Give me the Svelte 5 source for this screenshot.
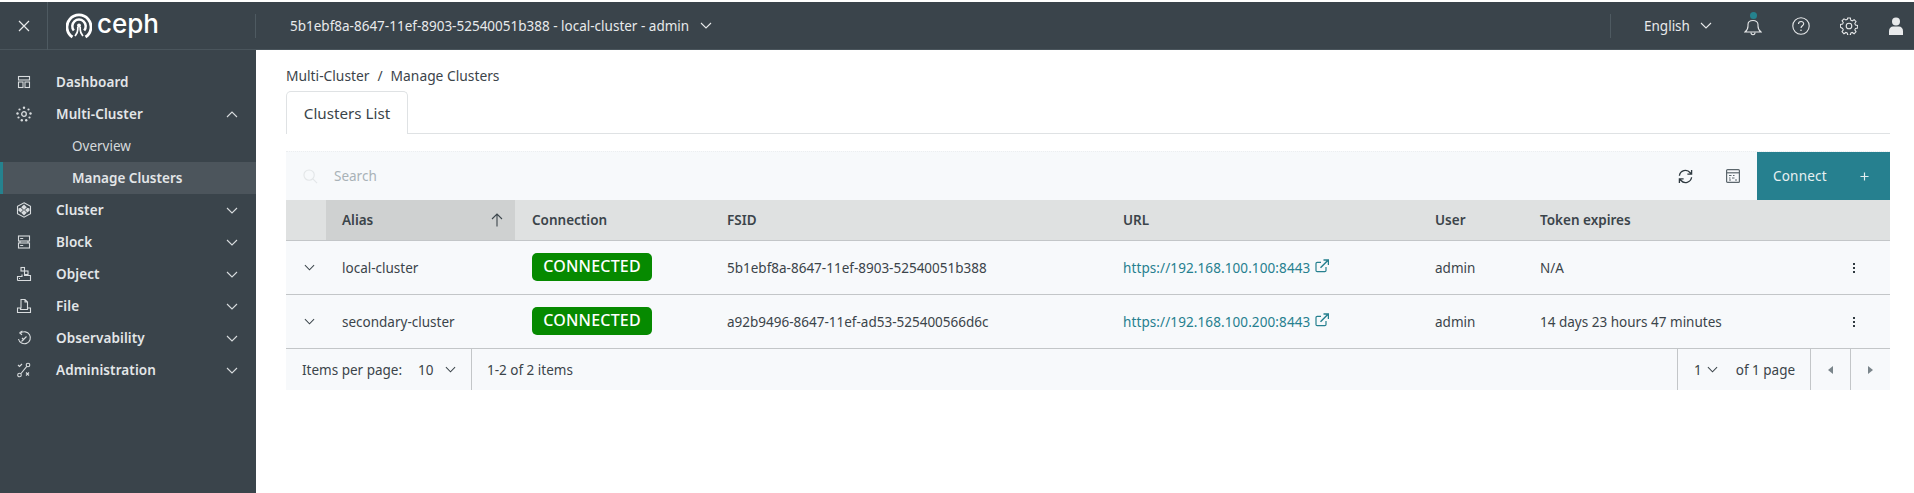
<script>
  const navItems = [
    { label: "Dashboard", icon: "dashboard" },
    { label: "Multi-Cluster", icon: "multi", open: true },
    { label: "Cluster", icon: "cluster", caret: true },
    { label: "Block", icon: "block", caret: true },
    { label: "Object", icon: "object", caret: true },
    { label: "File", icon: "file", caret: true },
    { label: "Observability", icon: "obs", caret: true },
    { label: "Administration", icon: "admin", caret: true },
  ];

  const clusters = [
    {
      alias: "local-cluster",
      fsid: "5b1ebf8a-8647-11ef-8903-52540051b388",
      url: "https://192.168.100.100:8443",
      user: "admin",
      expires: "N/A",
    },
    {
      alias: "secondary-cluster",
      fsid: "a92b9496-8647-11ef-ad53-525400566d6c",
      url: "https://192.168.100.200:8443",
      user: "admin",
      expires: "14 days 23 hours 47 minutes",
    },
  ];
</script>

{#snippet chevron(cls)}
  <svg class={cls} viewBox="0 0 12 7" width="12" height="7"><path d="M1 1l5 5 5-5" fill="none" stroke="currentColor" stroke-width="1.1" /></svg>
{/snippet}

{#snippet navIcon(name)}
  <svg class="nav-icon" viewBox="0 0 16 16" width="16" height="16" fill="none" stroke="currentColor" stroke-width="1.100">
    {#if name === "dashboard"}
      <rect x="2.500" y="2.500" width="11" height="3.500" /><rect x="2.500" y="8" width="4.500" height="5.500" /><rect x="9" y="8" width="4.500" height="5.500" />
    {:else if name === "multi"}
      <circle cx="8" cy="8" r="2.300" stroke-width="1.300" />
      <g fill="currentColor" stroke="none"><circle cx="8" cy="1.800" r="1.200" /><circle cx="12.500" cy="3.500" r="1.100" /><circle cx="14.500" cy="7.500" r="1.200" /><circle cx="13.500" cy="11.500" r="1.100" /><circle cx="10.200" cy="14.200" r="1.200" /><circle cx="5.800" cy="14.200" r="1.200" /><circle cx="2.500" cy="11.500" r="1.100" /><circle cx="1.500" cy="7.500" r="1.200" /><circle cx="3.500" cy="3.500" r="1.100" /></g>
    {:else if name === "cluster"}
      <path d="M8 .8l6.500 3.500v7.400L8 15.200l-6.500-3.500V4.300z" />
      <g fill="currentColor" stroke="none"><path d="M8 2.500l2.800 2.800L8 8 5.200 5.300z" /><path d="M8 8l2.800 2.800L8 13.500l-2.800-2.700z" /><path d="M4.500 5.700L7 8l-2.500 2.500-2-2V6.500z" /><path d="M11.500 5.700l2 .8v2l-2 2L9 8z" /></g>
    {:else if name === "block"}
      <rect x="2.500" y="2" width="11" height="5" /><rect x="2.500" y="9" width="11" height="5" />
      <path d="M4 7v2M12 7v2M4.200 4.500h3M4.200 11.500h3" />
    {:else if name === "object"}
      <rect x="5" y="1.500" width="3.500" height="3.500" /><rect x="8.500" y="5" width="3.500" height="3.500" />
      <path d="M1.500 14.500v-4h4.500v-2M1.500 14.500h13v-5h-6.500" /><path d="M3 12.500h1" />
    {:else if name === "file"}
      <path d="M5 10.500V1.500h4l2.500 2.500v6.500M9 1.500V4h2.500" />
      <path d="M1.500 10v4.500h13V10h-3v1.500h-7V10z" />
    {:else if name === "obs"}
      <path d="M3.500 2.800l3-1.800M3.500 2.800l2.500 2" />
      <path d="M4.500 3.200A6 6 0 1 1 2.500 9" />
      <path d="M5.500 11.500l5-5M6 8l2 2" />
    {:else}
      <circle cx="12" cy="3" r="1.800" /><circle cx="3.500" cy="13" r="1.800" />
      <path d="M5 11.500l5.800-7.200M2 3l1.500 1.500L6 2M10 10.500l3 3M13 10.500l-3 3" />
    {/if}
  </svg>
{/snippet}

<div class="page">
  <header class="topbar">
    <button class="close" aria-label="Close">
      <svg viewBox="0 0 12 12" width="12" height="12"><path d="M1 1l10 10M11 1L1 11" stroke="#e8eaeb" stroke-width="1.200" /></svg>
    </button>
    <div class="brand">
      <svg viewBox="0 0 26 26" width="26" height="26" fill="none" stroke="#fff">
        <path d="M6.500 24A12 12 0 1 1 19.500 24" stroke-width="2.800" />
        <path d="M7.800 17.500A6.700 6.700 0 1 1 18.200 17.500" stroke-width="2.500" />
        <circle cx="13" cy="12.500" r="2" fill="#fff" stroke="none" />
        <path d="M11.800 14v2.500c0 3-1 4-2.800 6.500M14.200 14v2.500c0 3 1 4 2.800 6.500" stroke-width="1.700" />
      </svg>
      <span class="brand-name">ceph</span>
    </div>
    <div class="cluster-select">
      <span>5b1ebf8a-8647-11ef-8903-52540051b388 - local-cluster - admin</span>
      {@render chevron("top-chev")}
    </div>
    <div class="utility">
      <div class="lang">
        <span>English</span>
        {@render chevron("top-chev")}
      </div>
      <span class="util-btn bell">
        <svg viewBox="0 0 18 22" width="18" height="22" fill="none" stroke="#e8eaeb" stroke-width="1.100">
          <path d="M1 17c2-1.500 3-3 3-6V9.500C4 7 6 5.500 9 5.500s5 1.500 5 4V11c0 3 1 4.500 3 6z" />
          <path d="M7 17.500c0 3 4 3 4 0" />
        </svg>
        <i class="dot"></i>
      </span>
      <span class="util-btn">
        <svg viewBox="0 0 18 18" width="18" height="18" fill="none" stroke="#e8eaeb" stroke-width="1.100">
          <circle cx="9" cy="9" r="8.200" />
          <path d="M6.500 7c0-3.200 5.200-3.200 5.200-.2 0 2-2.700 2-2.700 4.200" />
          <circle cx="9" cy="13.300" r=".8" fill="#e8eaeb" stroke="none" />
        </svg>
      </span>
      <span class="util-btn">
        <svg viewBox="0 0 18 18" width="18" height="18" fill="none" stroke="#e8eaeb" stroke-width="1.100">
          <circle cx="9" cy="9" r="2.800" />
          <path d="M7.600 .8h2.800l.4 2.300 1.500.7 2-1.200 2 2-1.300 1.900.7 1.600 2.300.4v2.800l-2.300.4-.7 1.500 1.300 2-2 2-2-1.300-1.500.7-.4 2.300H7.600l-.4-2.300-1.500-.7-2 1.300-2-2 1.300-2-.7-1.500L0 10.400V7.600l2.300-.4.700-1.600-1.300-1.900 2-2 2 1.200 1.500-.7z" transform="translate(.4 .2) scale(.96)" />
        </svg>
      </span>
      <span class="util-btn last">
        <svg viewBox="0 0 14 18" width="14" height="18" fill="#e8eaeb">
          <circle cx="7" cy="4.500" r="4" />
          <path d="M0 18v-4c0-3 2-4.500 4-4.500h6c2 0 4 1.500 4 4.500v4z" />
        </svg>
      </span>
    </div>
  </header>

  <div class="body">
    <nav class="sidebar">
      {#each navItems as item}
        <div class="nav-row">
          {@render navIcon(item.icon)}
          <span class="nav-label">{item.label}</span>
          {#if item.open}
            {@render chevron("nav-chev up")}
          {:else if item.caret}
            {@render chevron("nav-chev")}
          {/if}
        </div>
        {#if item.open}
          <div class="nav-sub">Overview</div>
          <div class="nav-sub active">Manage Clusters</div>
        {/if}
      {/each}
    </nav>

    <main class="content">
      <div class="crumbs">
        <span>Multi-Cluster</span><span class="sep">/</span><span>Manage Clusters</span>
      </div>
      <div class="tabs">
        <div class="tab">Clusters List</div>
      </div>

      <section class="datatable">
        <div class="toolbar">
          <svg class="search-icon" viewBox="0 0 16 16" width="15" height="15" fill="none" stroke="#e3e6e8" stroke-width="1.200">
            <circle cx="6.500" cy="6.500" r="5.500" /><path d="M10.500 10.500L15 15" />
          </svg>
          <span class="search">Search</span>
          <span class="tool">
            <svg viewBox="0 0 16 16" width="15" height="15" fill="none" stroke="#2f3a40" stroke-width="1.400">
              <path d="M1.500 7.200A6.500 6.500 0 0 1 13 4l1 1.500M14.500 1v4.500H10M14.500 8.800A6.500 6.500 0 0 1 3 12l-1-1.500M1.500 15v-4.500H6" />
            </svg>
          </span>
          <span class="tool">
            <svg viewBox="0 0 14 14" width="14" height="14" fill="none" stroke="#5b666c" stroke-width="1.200">
              <rect x=".6" y=".6" width="12.800" height="12.800" rx="1" />
              <path d="M.6 3.800h12.800" />
              <path d="M3 6.500h2.500M7 6.500h1.500M3 9h1.500M6 9h2.500M9 11h2M3 11h2" stroke-width="1" />
            </svg>
          </span>
          <button class="connect">
            <span>Connect</span>
            <svg viewBox="0 0 10 10" width="9" height="9"><path d="M5 .5v9M.5 5h9" stroke="#e3eef0" stroke-width="1.300" /></svg>
          </button>
        </div>

        <div class="grid head">
          <div class="cell"></div>
          <div class="cell sorted"><span>Alias</span>
            <svg viewBox="0 0 12 14" width="12" height="14" fill="none" stroke="#3c464c" stroke-width="1.100"><path d="M6 13.500V1M1 6l5-5 5 5" /></svg>
          </div>
          <div class="cell">Connection</div>
          <div class="cell">FSID</div>
          <div class="cell">URL</div>
          <div class="cell">User</div>
          <div class="cell">Token expires</div>
          <div class="cell"></div>
        </div>

        {#each clusters as c}
          <div class="grid row">
            <div class="cell expand">{@render chevron("row-chev")}</div>
            <div class="cell">{c.alias}</div>
            <div class="cell"><span class="badge">CONNECTED</span></div>
            <div class="cell">{c.fsid}</div>
            <div class="cell link">
              <span>{c.url}</span>
              <svg viewBox="0 0 14 14" width="14" height="14" fill="none" stroke="#26808f" stroke-width="1.200">
                <path d="M11 8v3.500a1.200 1.200 0 0 1-1.200 1.200H2.200A1.200 1.200 0 0 1 1 11.500V4.500a1.200 1.200 0 0 1 1.200-1.200H6" />
                <path d="M5.500 8.800L12.500 1.800M8.500 1h5v5" stroke-width="1.500" />
              </svg>
            </div>
            <div class="cell">{c.user}</div>
            <div class="cell">{c.expires}</div>
            <div class="cell kebab"><i></i><i></i><i></i></div>
          </div>
        {/each}

        <div class="pager">
          <div class="per-page">
            <span>Items per page:</span><span class="num">10</span>
            {@render chevron("row-chev")}
          </div>
          <div class="range">1-2 of 2 items</div>
          <div class="pages">
            <span>1</span>
            {@render chevron("row-chev small")}
            <span class="of">of 1 page</span>
          </div>
          <div class="step"><i class="tri left"></i></div>
          <div class="step"><i class="tri right"></i></div>
        </div>
      </section>
    </main>
  </div>
</div>

<style>
  :global(body) {
    margin: 0;
    background: #fff;
    font-family: "Noto Sans", "Open Sans", sans-serif;
  }
  .page {
    padding-top: 2px;
    height: 491px;
    display: flex;
    flex-direction: column;
    overflow: hidden;
    font-size: 13.500px;
    color: #3b444a;
  }
  .topbar {
    flex: 0 0 48px;
    box-sizing: border-box;
    height: 48px;
    display: flex;
    align-items: center;
    background: #3a444b;
    border-bottom: 1px solid #4a555c;
    color: #e8eaeb;
  }
  .close {
    width: 48px;
    height: 48px;
    padding: 0;
    background: none;
    border: none;
    border-right: 1px solid #4e5a61;
    display: flex;
    align-items: center;
    justify-content: center;
  }
  .brand {
    box-sizing: border-box;
    width: 208px;
    height: 24px;
    padding-left: 18px;
    display: flex;
    align-items: center;
    gap: 5px;
    border-right: 1px solid #4e5a61;
  }
  .brand-name {
    font-family: Inter, sans-serif;
    font-size: 26px;
    font-weight: 500;
    line-height: 24px;
    color: #fff;
    margin-top: -4px;
  }
  .cluster-select {
    margin-left: 34px;
    display: flex;
    align-items: center;
    gap: 11px;
    font-size: 13.500px;
  }
  .utility {
    margin-left: auto;
    display: flex;
    align-items: center;
    height: 24px;
    border-left: 1px solid #4e5a61;
  }
  .lang {
    width: 118px;
    box-sizing: border-box;
    padding-left: 33px;
    display: flex;
    align-items: center;
    gap: 10px;
  }
  .util-btn {
    width: 48px;
    display: flex;
    justify-content: center;
    position: relative;
  }
  .util-btn.last {
    width: 41px;
    justify-content: flex-end;
    padding-right: 11px;
    box-sizing: border-box;
  }
  .dot {
    position: absolute;
    top: -3px;
    left: 21px;
    width: 7px;
    height: 7px;
    border-radius: 50%;
    background: #25828e;
  }
  .top-chev {
    color: #e8eaeb;
  }
  .body {
    flex: 1;
    display: flex;
    min-height: 0;
  }
  .sidebar {
    width: 256px;
    flex: 0 0 256px;
    background: #3a444b;
    padding-top: 16px;
    color: #e3e6e8;
  }
  .nav-row {
    height: 32px;
    display: flex;
    align-items: center;
    padding-left: 16px;
    padding-right: 18px;
  }
  .nav-icon {
    flex: 0 0 16px;
    color: #d8dcde;
  }
  .nav-label {
    margin-left: 24px;
    font-weight: 600;
    letter-spacing: .1px;
    flex: 1;
  }
  .nav-chev {
    color: #d8dcde;
  }
  .nav-chev.up {
    transform: rotate(180deg);
  }
  .nav-sub {
    height: 32px;
    line-height: 32px;
    padding-left: 72px;
    color: #d5d9db;
  }
  .nav-sub.active {
    background: #4c555c;
    border-left: 3px solid #25828e;
    padding-left: 69px;
    font-weight: 600;
    color: #e3e6e8;
  }
  .content {
    flex: 1;
    padding: 0 24px 0 30px;
    min-width: 0;
  }
  .crumbs {
    margin-top: 15px;
    height: 21px;
    line-height: 21px;
    display: flex;
    gap: 8px;
    font-size: 13.800px;
  }
  .tabs {
    margin-top: 5px;
    height: 42px;
    border-bottom: 1px solid #dfe2e4;
  }
  .tab {
    box-sizing: border-box;
    width: 122px;
    height: 43px;
    background: #fff;
    border: 1px solid #dfe2e4;
    border-bottom: 0;
    border-radius: 5px 5px 0 0;
    text-align: center;
    line-height: 43px;
    font-size: 15.200px;
  }
  .datatable {
    margin-top: 17px;
    background: #f7f9fb;
  }
  .toolbar {
    height: 48px;
    display: flex;
    align-items: center;
    border-top: 1px dotted #eceef0;
  }
  .search-icon {
    margin-left: 17px;
  }
  .search {
    margin-left: 16px;
    flex: 1;
    color: #a9b2b7;
  }
  .tool {
    width: 48px;
    display: flex;
    justify-content: center;
  }
  .connect {
    width: 133px;
    height: 48px;
    padding: 0 21px 0 16px;
    border: none;
    background: #26808f;
    color: #e8f1f2;
    display: flex;
    align-items: center;
    justify-content: space-between;
    font: inherit;
    letter-spacing: .2px;
  }
  .grid {
    display: grid;
    grid-template-columns: 40px 189px 195px 396px 312px 105px 1fr 48px;
  }
  .cell {
    display: flex;
    align-items: center;
    padding-left: 17px;
    white-space: nowrap;
    min-width: 0;
  }
  .head {
    height: 40px;
    background-color: #dfe1e1;
    background-image: radial-gradient(#c9cccc 0.5px, transparent 0.7px);
    background-size: 6px 6px;
    border-bottom: 1px solid #c3c6c8;
    font-weight: 600;
  }
  .sorted {
    background: #cfd1d1;
    background-image: radial-gradient(#bcbfbf 0.5px, transparent 0.7px);
    background-size: 6px 6px;
    padding-left: 16px;
    padding-right: 12px;
    justify-content: space-between;
  }
  .row {
    height: 53px;
    border-bottom: 1px solid #c3c6c8;
  }
  .row:last-of-type {
    border-bottom-width: 2px;
  }
  .row .cell:nth-child(2) {
    padding-left: 16px;
  }
  .expand {
    padding-left: 18px;
  }
  .row-chev {
    color: #3b444a;
    width: 11px;
  }
  .badge {
    margin-top: -2px;
    width: 120px;
    height: 28px;
    line-height: 27px;
    text-align: center;
    background: #068a00;
    border-radius: 5px;
    color: #fff;
    font-weight: 500;
    font-size: 16px;
    letter-spacing: .2px;
  }
  .link {
    color: #26808f;
    gap: 5px;
    letter-spacing: .1px;
  }
  .link svg {
    margin-top: -3px;
  }
  .kebab {
    flex-direction: column;
    justify-content: center;
    gap: 2px;
    padding: 0 24px 0 0;
  }
  .kebab i {
    width: 2px;
    height: 2px;
    background: #2f3a40;
  }
  .pager {
    height: 41px;
    display: flex;
    align-items: center;
  }
  .per-page {
    width: 186px;
    height: 100%;
    box-sizing: border-box;
    padding-left: 16px;
    display: flex;
    align-items: center;
    border-right: 1px solid #c3c6c8;
  }
  .num {
    margin-left: 16px;
    margin-right: 11px;
  }
  .range {
    flex: 1;
    padding-left: 15px;
  }
  .pages {
    width: 133px;
    height: 100%;
    box-sizing: border-box;
    padding-left: 16px;
    display: flex;
    align-items: center;
    gap: 5px;
    border-left: 1px solid #c3c6c8;
  }
  .of {
    margin-left: 13px;
  }
  .step {
    width: 39px;
    height: 100%;
    display: flex;
    align-items: center;
    justify-content: center;
    border-left: 1px solid #c3c6c8;
  }
  .tri {
    width: 0;
    height: 0;
    border-top: 4px solid transparent;
    border-bottom: 4px solid transparent;
  }
  .tri.left {
    border-right: 5px solid #7a858b;
  }
  .tri.right {
    border-left: 5px solid #7a858b;
  }
</style>
